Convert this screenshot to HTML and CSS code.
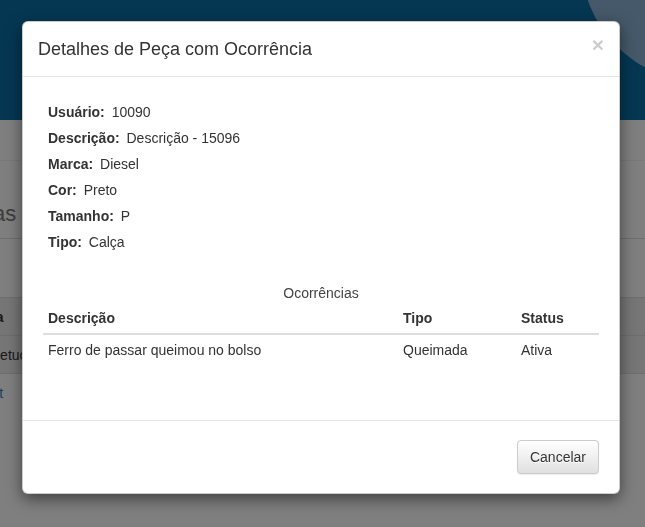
FILE: index.html
```html
<!DOCTYPE html>
<html lang="pt-BR">
<head>
<meta charset="utf-8">
<title>Detalhes de Peça com Ocorrência</title>
<link rel="stylesheet" href="styles.css">
</head>
<body>
<div class="page">
  <header class="navbar"><span class="navbar-deco"></span></header>
  <div class="subbar"></div>
  <div class="page-header"><h2>Peças</h2></div>
  <div class="toolbar"></div>
  <div class="list">
    <div class="list-row shaded head"><span>Marca</span></div>
    <div class="list-row shaded item"><span>Retucado</span></div>
    <div class="list-row link-row"><a href="#">Edit</a></div>
  </div>
</div>

<div class="backdrop"></div>

<div class="modal" role="dialog">
  <div class="modal-header">
    <button class="close" type="button" aria-label="Fechar">×</button>
    <h4 class="modal-title">Detalhes de Peça com Ocorrência</h4>
  </div>
  <div class="modal-body">
    <div class="details">
      <div class="field"><b>Usuário:</b> 10090</div>
      <div class="field"><b>Descrição:</b> Descrição - 15096</div>
      <div class="field"><b>Marca:</b> Diesel</div>
      <div class="field"><b>Cor:</b> Preto</div>
      <div class="field"><b>Tamanho:</b> P</div>
      <div class="field"><b>Tipo:</b> Calça</div>
    </div>
    <table class="occ-table">
      <caption>Ocorrências</caption>
      <thead>
        <tr><th class="col-desc">Descrição</th><th class="col-tipo">Tipo</th><th>Status</th></tr>
      </thead>
      <tbody>
        <tr><td>Ferro de passar queimou no bolso</td><td>Queimada</td><td>Ativa</td></tr>
      </tbody>
    </table>
  </div>
  <div class="modal-footer">
    <button class="btn" type="button">Cancelar</button>
  </div>
</div>
</body>
</html>
```

FILE: styles.css
```css
* { box-sizing: border-box; }

html, body {
  margin: 0;
  height: 100%;
}

body {
  font-family: "Liberation Sans", Arial, Helvetica, sans-serif;
  font-size: 14px;
  line-height: 20px;
  color: #333;
  background: #fff;
  overflow: hidden;
}

/* ---------- page behind the modal ---------- */
.navbar {
  height: 120px;
  background: #0a6ea6;
  position: relative;
  overflow: hidden;
}

.navbar-deco {
  position: absolute;
  left: 581px;
  top: -162px;
  width: 244px;
  height: 244px;
  border-radius: 50%;
  background: #8ab3d5;
}

.subbar {
  height: 41px;
  border-bottom: 1px solid #f0f0f0;
}

.page-header {
  height: 78px;
  padding-top: 41px;
  border-bottom: 1px solid #dcdcdc;
}

.page-header h2 {
  margin: 0 0 0 -45px;
  font-size: 22px;
  line-height: 24px;
  font-weight: normal;
  color: #7a7a7a;
}

.toolbar {
  height: 58px;
}

.list-row {
  height: 38px;
  padding: 9px 0;
  border-top: 1px solid #dcdcdc;
}

.list-row.shaded { background: #ececec; }

.list-row.head span {
  display: inline-block;
  margin-left: -37px;
  font-weight: bold;
}

.list-row.item span {
  display: inline-block;
  margin-left: -10px;
}

.list-row.link-row a {
  display: inline-block;
  margin-left: -21px;
  color: #337ab7;
  text-decoration: none;
}

/* ---------- modal ---------- */
.backdrop {
  position: fixed;
  inset: 0;
  background: rgba(0, 0, 0, 0.5);
}

.modal {
  position: absolute;
  top: 21px;
  left: 22px;
  width: 598px;
  background: #fff;
  border: 1px solid rgba(0, 0, 0, 0.2);
  border-radius: 6px;
  box-shadow: 0 5px 15px rgba(0, 0, 0, 0.5);
}

.modal-header {
  padding: 15px;
  border-bottom: 1px solid #e5e5e5;
}

.modal-title {
  margin: 0;
  font-size: 18px;
  font-weight: normal;
  line-height: 24px;
  color: #333;
}

.close {
  float: right;
  margin-top: -3px;
  padding: 0;
  border: 0;
  background: transparent;
  font-family: inherit;
  font-size: 21px;
  font-weight: bold;
  line-height: 1;
  color: #000;
  opacity: 0.2;
  cursor: pointer;
}

.modal-body {
  padding: 20px;
}

.details {
  display: flex;
  flex-direction: column;
  gap: 6px;
  padding: 5px 5px 0;
  margin-bottom: 23px;
}

.field b {
  margin-right: 3px;
}

.occ-table {
  width: 100%;
  border-collapse: collapse;
  table-layout: fixed;
  margin-bottom: 20px;
}

.occ-table caption {
  padding: 8px 0 0;
  text-align: center;
  color: #444;
}

.occ-table th,
.occ-table td {
  padding: 5px;
  text-align: left;
  line-height: 20px;
}

.occ-table th {
  font-weight: bold;
  border-bottom: 2px solid #ddd;
}

.occ-table td {
  border-top: 1px solid #ddd;
}

.col-desc { width: 355px; }
.col-tipo { width: 118px; }

.modal-footer {
  margin-top: 15px;
  padding: 19px 20px 19px;
  border-top: 1px solid #e5e5e5;
  text-align: right;
}

.btn {
  display: inline-block;
  padding: 6px 12px;
  font-family: inherit;
  font-size: 14px;
  line-height: 20px;
  color: #333;
  background-image: linear-gradient(to bottom, #fff 0, #e0e0e0 100%);
  border: 1px solid #ccc;
  border-radius: 4px;
  box-shadow: inset 0 1px 0 rgba(255, 255, 255, 0.15), 0 1px 1px rgba(0, 0, 0, 0.075);
  text-shadow: 0 1px 0 #fff;
  cursor: pointer;
}
```
